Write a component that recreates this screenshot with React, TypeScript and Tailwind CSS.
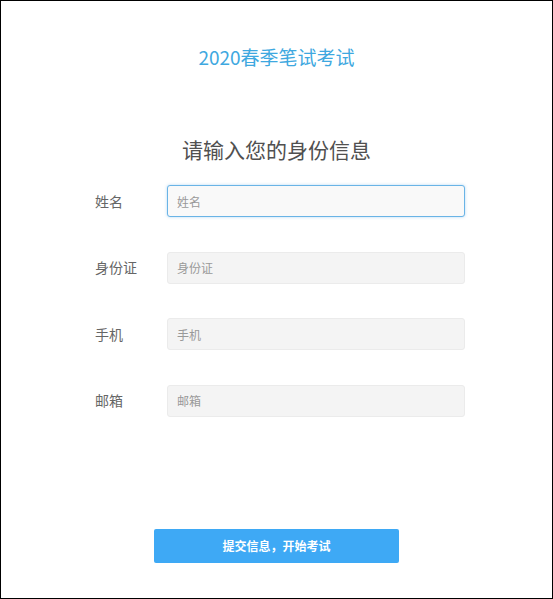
import { useState } from 'react'

const fields = [
  { key: 'name', label: '姓名' },
  { key: 'idcard', label: '身份证' },
  { key: 'phone', label: '手机' },
  { key: 'email', label: '邮箱' },
]

export default function App() {
  const [values, setValues] = useState<Record<string, string>>({})

  return (
    <div
      className="w-[553px] h-[599px] border border-black bg-white flex flex-col items-center"
      style={{ fontFamily: '"Noto Sans CJK SC", "Noto Sans", sans-serif' }}
    >
      <h1 className="mt-[42px] text-[19px] leading-[28px] text-[#3ea8e0] font-normal">
        2020春季笔试考试
      </h1>

      <h2 className="mt-[63px] text-[21px] leading-[30px] text-[#505050] font-normal">
        请输入您的身份信息
      </h2>

      {/* Form rows */}
      <div className="mt-[21px] self-start ml-[94px] flex flex-col gap-[34.5px]">
        {fields.map((f, i) => (
          <div key={f.key} className="flex items-center">
            <label className="w-[72px] text-[14px] text-[#666]">{f.label}</label>
            <input
              autoFocus={i === 0}
              value={values[f.key] ?? ''}
              onChange={(e) => setValues({ ...values, [f.key]: e.target.value })}
              placeholder={f.label}
              className={`w-[298px] h-[32px] px-[9px] rounded-[3px] text-[12px] text-[#555] placeholder:text-[#999] outline-none border ${
                i === 0
                  ? 'bg-[#f9f9f9] border-[#6ab4e6] shadow-[0_0_3px_rgba(102,175,233,0.5)]'
                  : 'bg-[#f4f4f4] border-[#ebebeb]'
              }`}
            />
          </div>
        ))}
      </div>

      <button className="mt-[112px] w-[245px] h-[34px] rounded-[2px] bg-[#3ea9f5] text-white text-[12px] font-semibold">
        提交信息，开始考试
      </button>
    </div>
  )
}
